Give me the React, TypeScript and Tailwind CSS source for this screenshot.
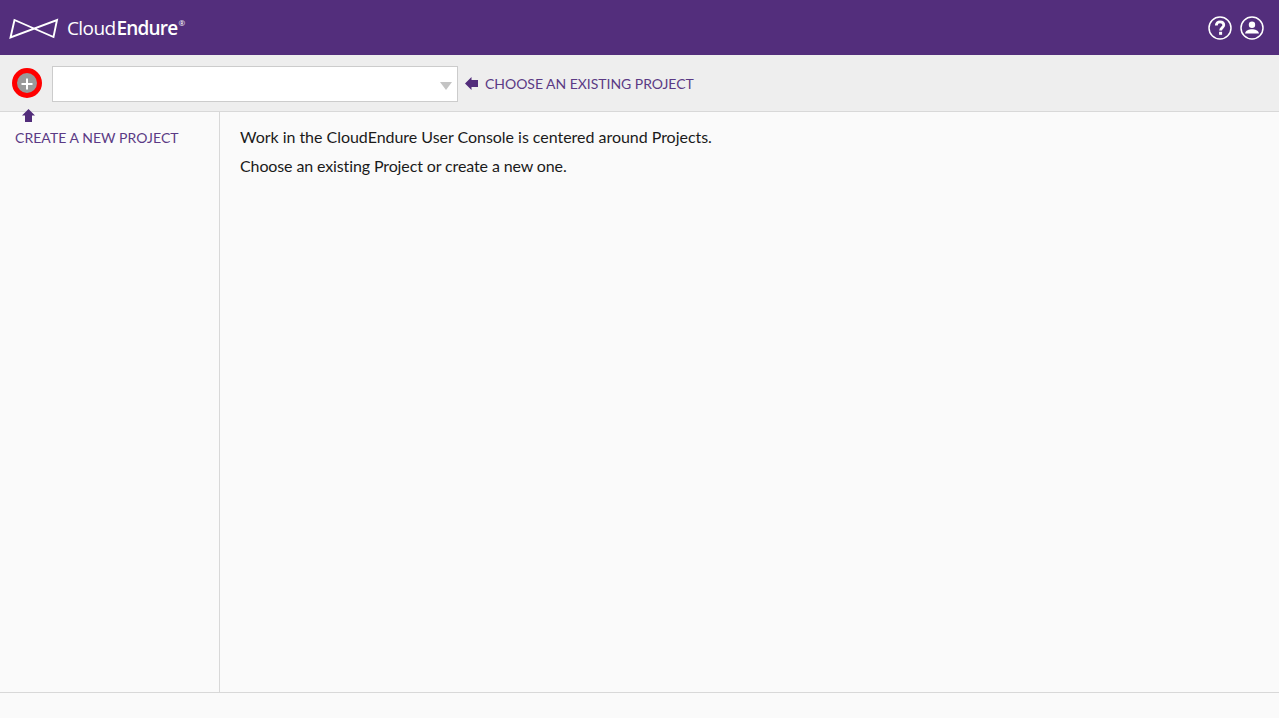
import React from 'react';

const Logo = () => (
  <svg width="50" height="22" viewBox="0 0 50 22" fill="none" stroke="white" strokeWidth="1.9" className="mt-[2px]">
    <path d="M5.5 2 L1.5 19.5 L48 2 L44.5 19 Z" strokeLinejoin="miter" />
  </svg>
);

const HelpIcon = () => (
  <svg width="24" height="24" viewBox="0 0 24 24" fill="none">
    <circle cx="12" cy="12" r="11" stroke="white" strokeWidth="1.5" />
    <path d="M8.3 9.5 C8.3 7.2 10 5.8 12 5.8 C14.3 5.8 15.8 7.2 15.8 9.1 C15.8 11.6 12.6 11.6 12.6 14.4" stroke="white" strokeWidth="2.8" />
    <rect x="11.1" y="15.8" width="3" height="3" fill="white" />
  </svg>
);

const UserIcon = () => (
  <svg width="24" height="24" viewBox="0 0 24 24" fill="none">
    <circle cx="12" cy="12" r="11" stroke="white" strokeWidth="1.5" />
    <circle cx="12" cy="8.8" r="3.2" fill="white" />
    <path d="M5 17.5 C5.5 14.2 9 13.2 12 13.2 C15 13.2 18.5 14.2 19 17.5 Z" fill="white" />
  </svg>
);

const ArrowLeftIcon = () => (
  <svg width="13" height="13" viewBox="0 0 13 13" fill="#522d7b">
    <path d="M0 6.5 L6.5 0 L6.5 3 L13 3 L13 10 L6.5 10 L6.5 13 Z" />
  </svg>
);

const ArrowUpIcon = () => (
  <svg width="13" height="13" viewBox="0 0 13 13" fill="#522d7b">
    <path d="M6.5 0 L13 6.5 L10 6.5 L10 13 L3 13 L3 6.5 L0 6.5 Z" />
  </svg>
);

export default function App() {
  return (
    <div className="h-[718px] flex flex-col bg-[#fafafa] font-['Lato','Open_Sans',sans-serif] overflow-hidden">
      {/* header */}
      <header className="h-[55px] shrink-0 bg-[#532e7c] flex items-center justify-between pl-[9px] pr-[15px]">
        <div className="flex items-center gap-[8px]">
          <Logo />
          <span className="text-white text-[19px] leading-none mt-[2px] font-['Open_Sans',sans-serif] font-normal">
            <span className="tracking-[-0.6px]">Cloud</span>
            <span className="font-semibold tracking-[-0.8px] ml-[1px]">Endure</span>
            <span className="text-[8px] align-top font-normal ml-[1px]">®</span>
          </span>
        </div>
        <div className="flex items-center gap-[8px]">
          <HelpIcon />
          <UserIcon />
        </div>
      </header>

      {/* project bar */}
      <div className="h-[57px] shrink-0 bg-[#eeeeee] border-b border-[#d8d8d8] flex items-center pl-[12px] relative">
        <button className="w-[30px] h-[30px] rounded-full border-[5px] border-[#ff0000] bg-[#999999] flex items-center justify-center">
          <svg width="12" height="12" viewBox="0 0 12 12" fill="white" className="mt-[2px]">
            <rect x="0.5" y="5" width="11" height="2" />
            <rect x="5" y="0.5" width="2" height="11" />
          </svg>
        </button>
        <div className="ml-[10px] mt-[2px] w-[406px] h-[36px] bg-white border border-[#cccccc] flex items-center justify-end pr-[5px]">
          <div className="w-0 h-0 border-l-[6.5px] border-r-[6.5px] border-t-[8px] border-l-transparent border-r-transparent border-t-[#c4c4c4] mt-[3px]" />
        </div>
        <div className="ml-[7px] flex items-center gap-[7px] text-[#5b3a85] text-[14px] tracking-[-0.03px]">
          <ArrowLeftIcon />
          <span>CHOOSE AN EXISTING PROJECT</span>
        </div>
        <div className="absolute left-[22px] top-[54px]">
          <ArrowUpIcon />
        </div>
      </div>

      {/* body */}
      <div className="flex flex-1 min-h-0">
        <aside className="w-[220px] shrink-0 border-r border-[#d8d8d8] pl-[15px] pt-[16px]">
          <span className="text-[#5b3a85] text-[14px] leading-[19px] tracking-[0.05px] block">CREATE A NEW PROJECT</span>
        </aside>
        <main className="pl-[20px] pt-[14px] text-[#1a1a1a] text-[16px] leading-[21px]">
          <p className="mb-[8px] tracking-[-0.03px]">Work in the CloudEndure User Console is centered around Projects.</p>
          <p className="tracking-[-0.12px]">Choose an existing Project or create a new one.</p>
        </main>
      </div>

      {/* footer */}
      <footer className="h-[26px] shrink-0 border-t border-[#d8d8d8] bg-[#fafafa]" />
    </div>
  );
}
